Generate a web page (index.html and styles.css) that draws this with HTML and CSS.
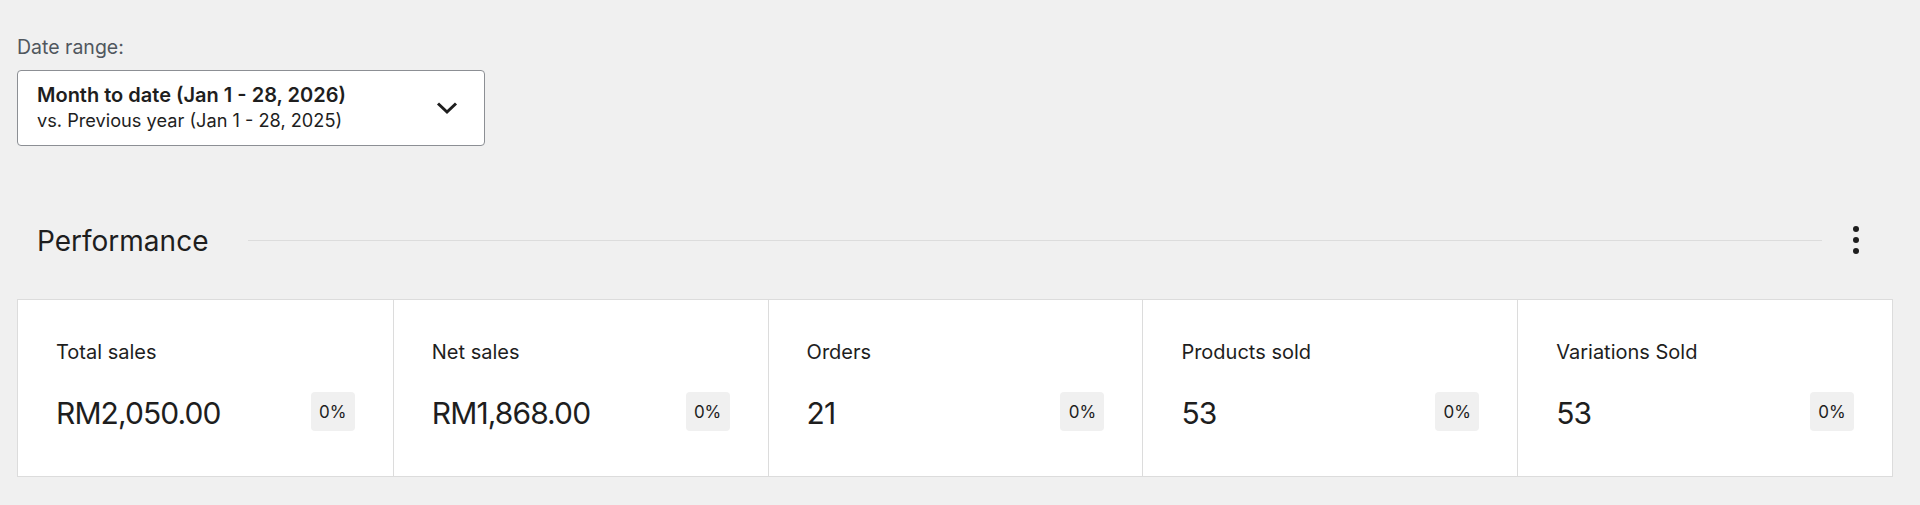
FILE: index.html
```html
<!DOCTYPE html>
<html>
<head>
<meta charset="utf-8">
<link rel="stylesheet" href="styles.css">
</head>
<body>
<div class="page">
  <div class="date-filter">
    <div class="date-label">Date range:</div>
    <button class="date-select">
      <span class="date-text">
        <span class="date-main">Month to date (Jan 1 - 28, 2026)</span>
        <span class="date-compare">vs. Previous year (Jan 1 - 28, 2025)</span>
      </span>
      <svg class="chevron" width="22" height="14" viewBox="0 0 22 14"><polyline points="2,2.5 11,11 20,2.5" fill="none" stroke="#1e1e1e" stroke-width="3"/></svg>
    </button>
  </div>

  <section class="performance">
    <div class="section-header">
      <h2 class="section-title">Performance</h2>
      <div class="section-line"></div>
      <button class="kebab" aria-label="More">
        <svg width="8" height="30" viewBox="0 0 8 30"><circle cx="4" cy="4" r="3" fill="#1e1e1e"/><circle cx="4" cy="15" r="3" fill="#1e1e1e"/><circle cx="4" cy="26" r="3" fill="#1e1e1e"/></svg>
      </button>
    </div>
    <div class="cards">
      <div class="card">
        <div class="card-label">Total sales</div>
        <div class="card-row"><span class="card-value">RM2,050.00</span><span class="badge">0%</span></div>
      </div>
      <div class="card">
        <div class="card-label">Net sales</div>
        <div class="card-row"><span class="card-value">RM1,868.00</span><span class="badge">0%</span></div>
      </div>
      <div class="card">
        <div class="card-label">Orders</div>
        <div class="card-row"><span class="card-value">21</span><span class="badge">0%</span></div>
      </div>
      <div class="card">
        <div class="card-label">Products sold</div>
        <div class="card-row"><span class="card-value">53</span><span class="badge">0%</span></div>
      </div>
      <div class="card">
        <div class="card-label">Variations Sold</div>
        <div class="card-row"><span class="card-value">53</span><span class="badge">0%</span></div>
      </div>
    </div>
  </section>
</div>
</body>
</html>
```
FILE: styles.css
```css
* { box-sizing: border-box; }
html, body {
  margin: 0;
  background: #f0f0f0;
  font-family: Inter, "Noto Sans", "Liberation Sans", sans-serif;
  color: #1e1e1e;
}
.page {
  padding: 35px 27px 0 17px;
}
.date-label {
  font-size: 19.5px;
  line-height: 24px;
  color: #50575e;
  margin-bottom: 11px;
}
.date-select {
  display: flex;
  align-items: center;
  justify-content: space-between;
  width: 468px;
  height: 76px;
  padding: 0 26px 0 19px;
  background: #fff;
  border: 1px solid #8c8f94;
  border-radius: 4px;
  font-family: inherit;
  color: #1e1e1e;
  text-align: left;
  cursor: pointer;
}
.date-text {
  display: flex;
  flex-direction: column;
}
.date-main {
  font-size: 20px;
  font-weight: 600;
  line-height: 25px;
}
.date-compare {
  font-size: 18.2px;
  line-height: 25px;
}
.chevron { display: block; }

.performance {
  margin-top: 70px;
}
.section-header {
  display: flex;
  align-items: center;
  height: 48px;
  padding-left: 20px;
}
.section-title {
  margin: 0;
  padding-top: 2px;
  font-size: 28px;
  font-weight: 400;
  line-height: 36px;
  color: #1e1e1e;
}
.section-line {
  flex: 1;
  height: 1px;
  background: #dcdcdc;
  margin: 0 10px 0 40px;
}
.kebab {
  width: 48px;
  height: 48px;
  margin-right: 13px;
  display: flex;
  align-items: center;
  justify-content: center;
  background: none;
  border: 0;
  padding: 0;
}
.kebab svg { display: block; }

.cards {
  display: grid;
  grid-template-columns: repeat(5, 1fr);
  margin-top: 35px;
  border: 1px solid #dcdcdc;
  background: #fff;
}
.card {
  height: 176px;
  padding: 40px 38px 0 38px;
  border-left: 1px solid #dcdcdc;
}
.card:first-child { border-left: 0; }
.card-label {
  font-size: 20px;
  line-height: 24px;
}
.card-row {
  display: flex;
  align-items: flex-start;
  justify-content: space-between;
  margin-top: 28px;
}
.card-value {
  margin-top: 1px;
  font-size: 30px;
  line-height: 40px;
  letter-spacing: -0.9px;
}
.badge {
  display: flex;
  align-items: center;
  justify-content: center;
  width: 44px;
  height: 39px;
  border-radius: 4px;
  background: #f0f0f0;
  font-size: 17px;
}
```
